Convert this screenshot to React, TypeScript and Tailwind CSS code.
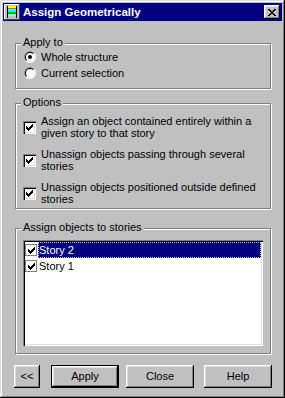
import React from "react";

const raised =
  "shadow-[inset_-1px_-1px_0_#000,inset_1px_1px_0_#fff,inset_-2px_-2px_0_#808080,inset_2px_2px_0_#dfdfdf]";
const sunken =
  "shadow-[inset_1px_1px_0_#808080,inset_2px_2px_0_#000,inset_-1px_-1px_0_#fff,inset_-2px_-2px_0_#dfdfdf]";

function Check({ color = "#000" }: { color?: string }) {
  const px: [number, number, number][] = [
    [6, 0, 1],
    [5, 1, 2],
    [0, 2, 1],
    [4, 2, 3],
    [0, 3, 2],
    [3, 3, 3],
    [0, 4, 5],
    [1, 5, 3],
    [2, 6, 1],
  ];
  return (
    <svg width="7" height="7" viewBox="0 0 7 7" shapeRendering="crispEdges">
      {px.map(([x, y, w], i) => (
        <rect key={i} x={x} y={y} width={w} height={1} fill={color} />
      ))}
    </svg>
  );
}

function CheckBox() {
  return (
    <div className={`w-[13px] h-[13px] shrink-0 bg-white ${sunken} flex items-center justify-center`}>
      <Check />
    </div>
  );
}

function Radio({ on }: { on: boolean }) {
  return (
    <svg width="12" height="12" viewBox="0 0 12 12" className="shrink-0">
      <defs>
        <clipPath id="tl">
          <polygon points="0,0 12,0 0,12" />
        </clipPath>
      </defs>
      <circle cx="6" cy="6" r="6" fill="#fff" />
      <circle cx="6" cy="6" r="6" fill="#808080" clipPath="url(#tl)" />
      <circle cx="6" cy="6" r="5" fill="#dfdfdf" />
      <circle cx="6" cy="6" r="5" fill="#000" clipPath="url(#tl)" />
      <circle cx="6" cy="6" r="4" fill="#fff" />
      {on && <circle cx="6" cy="6" r="2" fill="#000" />}
    </svg>
  );
}

function Group({
  label,
  className,
  children,
}: {
  label: string;
  className: string;
  children: React.ReactNode;
}) {
  return (
    <div
      className={`relative w-[256px] border border-[#808080] shadow-[1px_1px_0_#fff,inset_1px_1px_0_#fff] ${className}`}
    >
      <span className="absolute left-[5px] top-[-8px] px-[2px] bg-[#c0c0c0] leading-[13px] whitespace-nowrap">
        {label}
      </span>
      {children}
    </div>
  );
}

function Btn({
  w,
  def,
  children,
  className = "",
}: {
  w: string;
  def?: boolean;
  children: React.ReactNode;
  className?: string;
}) {
  if (def) {
    return (
      <div className={`${w} h-[23px] border border-black ${className}`}>
        <div className={`w-full h-full ${raised} flex items-center justify-center`}>
          {children}
        </div>
      </div>
    );
  }
  return (
    <div className={`${w} h-[23px] ${raised} flex items-center justify-center ${className}`}>
      {children}
    </div>
  );
}

function TitleIcon() {
  return (
    <svg width="16" height="16" viewBox="0 0 16 16" shapeRendering="crispEdges" className="shrink-0">
      <rect x="0" y="0" width="16" height="16" fill="#c0c0c0" />
      <rect x="0" y="0" width="16" height="1" fill="#fff" />
      <rect x="0" y="0" width="1" height="16" fill="#fff" />
      <rect x="0" y="15" width="16" height="1" fill="#404040" />
      <rect x="15" y="0" width="1" height="16" fill="#404040" />
      <rect x="3" y="2" width="10" height="2" fill="#ffff00" />
      <rect x="3" y="6" width="10" height="2" fill="#00ffff" />
      <rect x="3" y="8" width="10" height="2" fill="#00c000" />
      <rect x="3" y="11" width="10" height="1" fill="#80ffff" />
      <rect x="3" y="2" width="1" height="12" fill="#000" />
      <rect x="12" y="2" width="1" height="12" fill="#000" />
      <rect x="4" y="4" width="8" height="1" fill="#808080" />
    </svg>
  );
}

function CloseGlyph() {
  const rows = ["XX....XX", ".XX..XX.", "..XXXX..", "...XX...", "..XXXX..", ".XX..XX.", "XX....XX"];
  return (
    <svg width="8" height="7" viewBox="0 0 8 7" shapeRendering="crispEdges">
      {rows.flatMap((r, y) =>
        r.split("").map((c, x) => (c === "X" ? <rect key={`${x}-${y}`} x={x} y={y} width="1" height="1" fill="#000" /> : null))
      )}
    </svg>
  );
}

function ListCheck() {
  return (
    <div className="w-[12px] h-[12px] shrink-0 border border-[#808080] bg-white flex items-center justify-center">
      <Check />
    </div>
  );
}

export default function App() {
  return (
    <div
      className={`w-[285px] h-[398px] bg-[#c0c0c0] p-[3px] flex flex-col text-[11px] text-black font-['Liberation_Sans',Arial,sans-serif] shadow-[inset_-1px_-1px_0_#000,inset_1px_1px_0_#dfdfdf,inset_-2px_-2px_0_#808080,inset_2px_2px_0_#fff]`}
    >
      {/* Title bar */}
      <div className="h-[18px] bg-[#000080] flex items-center pl-[1px]">
        <TitleIcon />
        <span className="ml-[3px] text-white font-bold text-[11.5px] leading-[18px] whitespace-nowrap">
          Assign Geometrically
        </span>
        <div className={`ml-auto mr-[2px] w-[16px] h-[14px] bg-[#c0c0c0] ${raised} flex items-center justify-center`}>
          <CloseGlyph />
        </div>
      </div>

      <div className="flex flex-col pl-[12px]">
        <Group label="Apply to" className="mt-[22px] h-[46px]">
          <div className="flex flex-col pt-[5px] pl-[8px]">
            <div className="h-[16px] flex items-center gap-[5px]">
              <Radio on />
              <span className="leading-[12px]">Whole structure</span>
            </div>
            <div className="h-[16px] flex items-center gap-[5px]">
              <Radio on={false} />
              <span className="leading-[12px]">Current selection</span>
            </div>
          </div>
        </Group>

        <Group label="Options" className="mt-[14px] h-[106px]">
          <div className="flex flex-col pt-[11px] pl-[7px] gap-[9px]">
            {[
              "Assign an object contained entirely within a given story to that story",
              "Unassign objects passing through several stories",
              "Unassign objects positioned outside defined stories",
            ].map((t) => (
              <div key={t} className="flex items-center gap-[5px]">
                <CheckBox />
                <span className="w-[222px] leading-[12px]">{t}</span>
              </div>
            ))}
          </div>
        </Group>

        <Group label="Assign objects to stories" className="mt-[19px] h-[126px]">
          <div className="pt-[11px] pl-[7px]">
            <div className={`w-[240px] h-[106px] bg-white ${sunken} p-[2px] flex flex-col`}>
              <div className="h-[16px] flex items-center">
                <ListCheck />
                <div className="ml-[1px] flex-1 h-[16px] bg-[#000080] text-white border border-dotted border-[#c0c0ff] flex items-center pl-[0px] leading-[12px]">
                  Story 2
                </div>
              </div>
              <div className="h-[16px] flex items-center">
                <ListCheck />
                <span className="ml-[2px] leading-[12px]">Story 1</span>
              </div>
            </div>
          </div>
        </Group>
      </div>

      <div className="flex pl-[11px] mt-[11px]">
        <Btn w="w-[26px]">&lt;&lt;</Btn>
        <Btn w="w-[68px]" def className="ml-[11px]">
          Apply
        </Btn>
        <Btn w="w-[68px]" className="ml-[7px]">
          Close
        </Btn>
        <Btn w="w-[68px]" className="ml-[10px]">
          Help
        </Btn>
      </div>
    </div>
  );
}
